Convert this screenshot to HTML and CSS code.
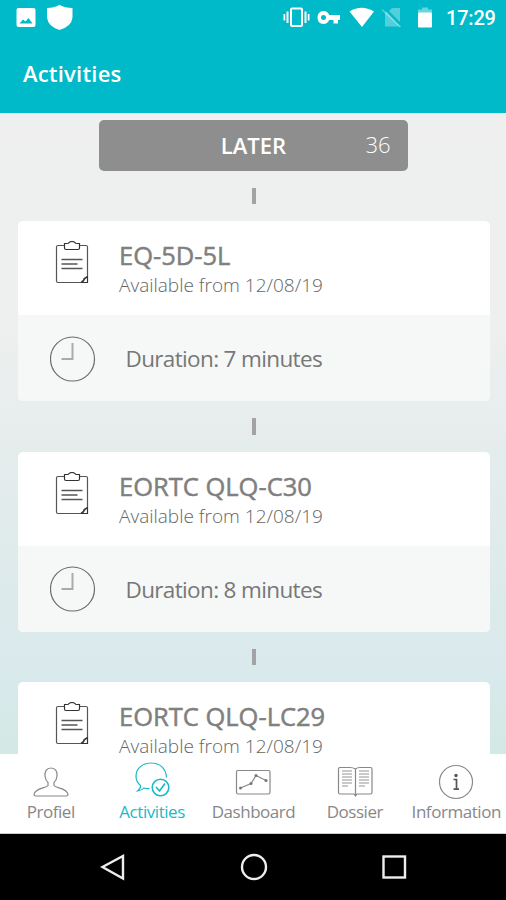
FILE: index.html
```html
<!DOCTYPE html>
<html lang="en">
<head>
<meta charset="utf-8">
<title>Activities</title>
<link rel="stylesheet" href="styles.css">
</head>
<body>
<svg width="0" height="0" class="defs">
  <symbol id="clipboard" viewBox="0 0 34 44">
    <g fill="none" stroke="#555" stroke-width="1.2">
      <path d="M9.500 4.500H3Q1.500 4.500 1.500 6V40Q1.500 41.500 3 41.500H26L32.500 35.500V6Q32.500 4.500 31 4.500H24.500"/>
      <path d="M9.500 2.500H13Q14.500 .5 17 .5Q19.500 .5 21 2.500H24.500V7Q24.500 8.500 23 8.500H11Q9.500 8.500 9.500 7Z" stroke="#333"/>
      <path d="M26 41.500H32.500V35.500M26 41.500Q29.500 40 29 37.500L32.500 35.500" stroke="#333"/>
      <path d="M6.500 18.500H27.500M6.500 23H22.500M6.500 27.500H27.500" stroke-width="1.400"/>
    </g>
  </symbol>
  <symbol id="clock" viewBox="0 0 46 46">
    <circle cx="22.500" cy="23" r="22" fill="none" stroke="#6c6c6c" stroke-width="1.200"/>
    <path d="M22.500 7V23H11.500" fill="none" stroke="#aaa" stroke-width="2"/>
  </symbol>
</svg>
<div class="phone">
  <header class="top">
    <div class="status">
      <svg class="status-left" width="60" height="28" viewBox="16 4 60 28" fill="#fff">
        <path fill-rule="evenodd" d="M18.500 8H33.500Q35.500 8 35.500 10V25Q35.500 27 33.500 27H18.500Q16.500 27 16.500 25V10Q16.500 8 18.500 8ZM19.500 23.500H32.500L28.500 18L25.500 21.500L23 19.500Z"/>
        <path d="M59.500 4.800Q65 8 72.500 8V17.500Q71.500 26.500 59.500 30Q48 26.500 47 17.500V8Q54 8 59.500 4.800Z"/>
      </svg>
      <svg class="status-right" width="154" height="28" viewBox="282 4 154 28" fill="#fff">
        <rect x="291" y="8.500" width="11" height="17.500" rx="1" fill="none" stroke="#fff" stroke-width="2"/>
        <path d="M286.500 11.500H288.500V23H286.500ZM283.500 14H285.200V20.500H283.500ZM304.500 11.500H306.500V23H304.500ZM307.800 14H309.500V20.500H307.800Z"/>
        <path fill-rule="evenodd" d="M323.500 11Q327.500 11 329.200 15H340V20H338V23.500H333.500V20H329.200Q327.500 24 323.500 24Q317.500 23.500 317.500 17.500Q317.500 11.500 323.500 11ZM323.500 15A2.500 2.500 0 1 0 323.500 20A2.500 2.500 0 1 0 323.500 15Z"/>
        <path d="M349.500 11.500Q361.500 4 374 11.500L362 27Z"/>
        <path d="M387 12L400 26.500H385V12ZM389 11L392 8H400V22Z" opacity=".32"/>
        <path d="M382 9.500L400.500 27" stroke="#fff" stroke-width="1.500" opacity=".35"/>
        <path d="M422 7.500H428V9.500H432V13H418V9.500H422Z" opacity=".4"/>
        <rect x="418" y="12.500" width="14" height="15" rx="1"/>
      </svg>
      <span class="time">17:29</span>
    </div>
    <h1 class="title"><span>Activities</span></h1>
  </header>

  <main class="feed">
    <div class="later"><span class="later-name">LATER</span><span class="later-count">36</span></div>
    <i class="link"></i>
    <section class="card">
      <div class="card-head">
        <svg class="clip"><use href="#clipboard"/></svg>
        <div><h2>EQ-5D-5L</h2><p>Available from 12/08/19</p></div>
      </div>
      <div class="card-foot"><svg class="clock"><use href="#clock"/></svg><span>Duration: 7 minutes</span></div>
    </section>
    <i class="link"></i>
    <section class="card">
      <div class="card-head">
        <svg class="clip"><use href="#clipboard"/></svg>
        <div><h2>EORTC QLQ-C30</h2><p>Available from 12/08/19</p></div>
      </div>
      <div class="card-foot"><svg class="clock"><use href="#clock"/></svg><span>Duration: 8 minutes</span></div>
    </section>
    <i class="link"></i>
    <section class="card">
      <div class="card-head">
        <svg class="clip"><use href="#clipboard"/></svg>
        <div><h2>EORTC QLQ-LC29</h2><p>Available from 12/08/19</p></div>
      </div>
    </section>
  </main>

  <nav class="tabs">
    <a class="tab"><svg width="40" height="40" viewBox="0 0 40 40"><path d="M20 5C15.500 5 13.500 8.500 14 13Q14.500 17.500 17 19.500V22.500C15 25.500 4 24.500 3 31.500Q3 33 5 33H35Q37 33 37 31.500C36 24.500 25 25.500 23 22.500V19.500Q25.500 17.500 26 13C26.500 8.500 24.500 5 20 5Z"/></svg><span>Profiel</span></a>
    <a class="tab active"><svg width="40" height="40" viewBox="0 0 40 40"><path d="M34.500 14.500C34 5.500 28 0 19 0C10 0 4 6 4 13Q4 19 8.500 22.500Q9 25 5.500 28Q10 27.500 12 25Q14.500 26 17.500 25.500"/><circle cx="28.500" cy="24.500" r="8.300" stroke-width="1.500"/><path d="M24 24L27.500 28L33 20.500" stroke-width="1.600"/></svg><span>Activities</span></a>
    <a class="tab"><svg width="40" height="40" viewBox="0 0 40 40"><rect x="3.500" y="7.500" width="33.500" height="23.500" rx="1.500"/><path d="M7.500 25L18 20.500L23 12.500L33 17.500"/><g fill="#777" stroke="none"><circle cx="7.500" cy="25" r="1.500"/><circle cx="18" cy="20.500" r="1.500"/><circle cx="23" cy="12.500" r="1.500"/><circle cx="33" cy="17.500" r="1.500"/></g></svg><span>Dashboard</span></a>
    <a class="tab"><svg width="40" height="40" viewBox="0 0 40 40"><path d="M20.500 6Q18 4.500 15 4.500H5Q3.500 4.500 3.500 6V29.500Q3.500 31 5 31H19L20.500 33L22 31H35.500Q37 31 37 29.500V6Q37 4.500 35.500 4.500H25Q22 4.500 20.500 6V33"/><path d="M7 8H17M7 11H17M7 14H17M7 17H17M7 20H17M7 23H13M24 8H34M24 11H34M24 14H34M24 17H34M24 20H34M24 23H30" stroke-width=".9"/></svg><span>Dossier</span></a>
    <a class="tab"><svg width="40" height="40" viewBox="0 0 40 40"><circle cx="20" cy="19" r="16.500"/><circle cx="20" cy="12.500" r="1.700" fill="#555" stroke="none"/><path d="M17.500 16.500H20.500V26M17.500 26.200H23" stroke="#555" stroke-width="1.700"/></svg><span>Information</span></a>
  </nav>

  <footer class="system">
    <svg width="30" height="30" viewBox="0 0 30 30"><path d="M25 4V26.500L4.500 15Z"/></svg>
    <svg width="30" height="30" viewBox="0 0 30 30"><circle cx="15" cy="15" r="12"/></svg>
    <svg width="30" height="30" viewBox="0 0 30 30"><rect x="4.500" y="4.500" width="21.500" height="21"/></svg>
  </footer>
</div>
</body>
</html>
```

FILE: styles.css
```css
* { box-sizing: border-box; margin: 0; padding: 0; }
body { font-family: "Open Sans", "Noto Sans", sans-serif; color: #777; }
.defs { display: none; }
.phone { width: 506px; height: 900px; display: flex; flex-direction: column; overflow: hidden; background: #fff; }
svg { display: block; flex: none; }
span, h1, h2, p { white-space: nowrap; }

.top { height: 113px; flex: none; background: #00b9c9; color: #fff; }
.status { height: 36px; padding: 4px 10px 4px 16px; display: flex; align-items: center; }
.status-right { margin-left: auto; }
.time { width: 50px; margin-left: 10px; font: 500 20px/28px Roboto, sans-serif; letter-spacing: -.2px; }
.title { padding: 21px 23px 0; font-size: 22px; line-height: 32px; font-weight: 600; letter-spacing: .2px; }

.feed { height: 641px; flex: none; overflow: hidden; padding: 7px 16px 0 17px; display: flex; flex-direction: column; align-items: center;
  background: linear-gradient(180deg, #efefef 0, #eeefef 220px, #e5ecec 340px, #dceaeb 500px, #d9e9ec 560px, #d3e9e4 641px); }
.later { width: 309px; height: 50.500px; flex: none; border-radius: 5px; background: #8e8e8e; color: #fff; display: grid; grid-template-columns: 60px 1fr 60px; align-items: center; text-align: center; }
.later-name { grid-column: 2; font-size: 22px; line-height: 28px; font-weight: 600; margin-top: -1px; }
.later-count { font-size: 22px; line-height: 28px; font-weight: 300; margin-top: -3px; }
.link { width: 4px; height: 16.500px; margin: 17px 0; flex: none; background: #a2a4a4; }
.card { width: 472px; flex: none; border-radius: 5px; overflow: hidden; background: #fff; }
.card-head { height: 94px; padding: 19px 0 0 37.500px; display: flex; }
.clip { width: 34px; height: 44px; margin: 1px 30px 0 0; }
.card h2 { font-size: 25.500px; line-height: 30px; font-weight: 400; color: #808080; -webkit-text-stroke: .5px #808080; }
.card p { font-size: 19px; line-height: 31px; font-weight: 300; color: #666; }
.card-foot { height: 86px; padding: 1px 0 0 32.500px; display: flex; align-items: center; background: #f6f7f7; font-size: 22.500px; letter-spacing: -.65px; }
.clock { width: 46px; height: 46px; margin-right: 29.500px; }

.tabs { height: 80px; flex: none; background: #fff; border-bottom: 1px solid #ccc; display: grid; grid-template-columns: repeat(5, 101.400px); }
.tab { display: flex; flex-direction: column; align-items: center; padding-top: 9px; font-size: 17px; line-height: 20px; letter-spacing: -.45px; color: #888; }
.tab svg { overflow: visible; fill: none; stroke: #888; stroke-width: 1.200; }
.tab span { margin-top: -1px; }
.active { color: #18b9c9; }
.active svg { stroke: #18b9c9; }

.system { height: 66px; flex: none; padding: 0 97px 0 98px; background: #000; display: flex; align-items: center; justify-content: space-between; }
.system svg { fill: none; stroke: #eee; stroke-width: 2.400; }
```
